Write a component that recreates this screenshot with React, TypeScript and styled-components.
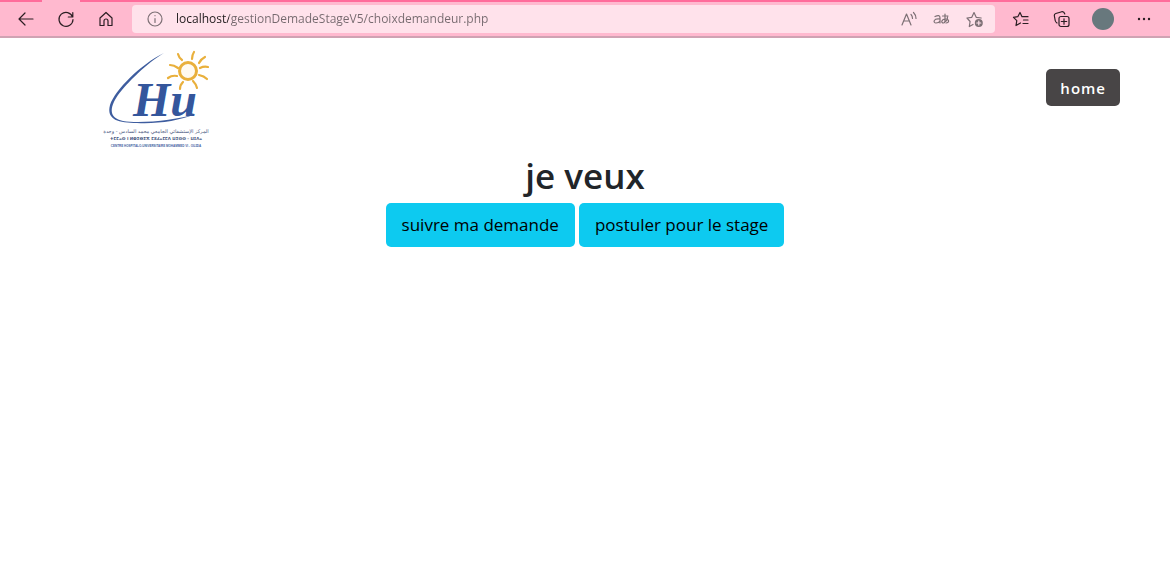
import React from "react";
import styled, { createGlobalStyle } from "styled-components";

const GlobalStyle = createGlobalStyle`
  *, *::before, *::after { box-sizing: border-box; }
  body {
    margin: 0;
    background: #fff;
    color: #212529;
    font-family: "Open Sans", "Noto Sans", sans-serif;
  }
`;

const TabStrip = styled.div`
  height: 2px;
  padding-left: 42px;
  background: #ff6c9b;
`;

const ActiveTab = styled.div`
  width: 38px;
  height: 2px;
  background: #ffb9cf;
`;

const Toolbar = styled.nav`
  display: flex;
  align-items: center;
  height: 36px;
  padding: 0 10px;
  background: #ffb9cf;
  border-bottom: 2px solid #cfa3b3;
`;

const IconGroup = styled.div<{ $gap: number }>`
  display: flex;
  align-items: center;
  gap: ${(p) => p.$gap}px;
`;

const IconButton = styled.button<{ $muted?: boolean }>`
  display: grid;
  place-items: center;
  width: 32px;
  height: 28px;
  padding: 0;
  border: 0;
  background: none;
  color: ${(p) => (p.$muted ? "#7d7075" : "#2b1e23")};
  cursor: pointer;
`;

const AddressBar = styled.form`
  display: flex;
  flex: 1;
  align-items: center;
  height: 28px;
  margin: 0 10px;
  padding: 0 4px 0 7px;
  border-radius: 4px;
  background: #ffe2eb;
`;

const AddressInput = styled.input`
  flex: 1;
  min-width: 0;
  height: 24px;
  margin-left: 5px;
  padding: 0;
  border: 0;
  outline: 0;
  font: 400 12px/24px "Open Sans", "Noto Sans", sans-serif;
  color: #75696e;
  background: linear-gradient(90deg, #1f1a1c 53px, #75696e 53px);
  -webkit-background-clip: text;
  background-clip: text;
  -webkit-text-fill-color: transparent;
`;

const Avatar = styled.span`
  width: 22px;
  height: 22px;
  border-radius: 50%;
  background: #68787d;
`;

const Header = styled.header`
  display: flex;
  align-items: flex-start;
  justify-content: space-between;
  padding: 10px 50px 0 103px;
`;

const HomeButton = styled.button`
  height: 37px;
  margin-top: 21px;
  padding: 0 14px;
  border: 0;
  border-radius: 5px;
  background: #484546;
  color: #fff;
  font: 600 15px/38px "Open Sans", "Noto Sans", sans-serif;
  letter-spacing: 1px;
  cursor: pointer;
`;

const Main = styled.main`
  display: flex;
  flex-direction: column;
  align-items: center;
  gap: 3px;
`;

const Title = styled.h1`
  margin: 0;
  font-size: 35px;
  font-weight: 600;
  line-height: 48px;
`;

const Actions = styled.div`
  display: flex;
  gap: 4px;
`;

const ActionButton = styled.button`
  height: 44px;
  padding: 0 16px;
  border: 0;
  border-radius: 5px;
  background: #0dcaf0;
  color: #000;
  font: 400 17px/44px "Open Sans", "Noto Sans", sans-serif;
  cursor: pointer;
`;

const Icon = ({ children, size = 18 }: { children: React.ReactNode; size?: number }) => (
  <svg
    width={size}
    height={size}
    viewBox="0 0 18 18"
    fill="none"
    stroke="currentColor"
    strokeWidth="1.2"
    strokeLinecap="round"
    strokeLinejoin="round"
    aria-hidden="true"
  >
    {children}
  </svg>
);

const Logo = () => (
  <svg width="110" height="104" viewBox="0 0 110 104" role="img" aria-label="CHU Mohammed VI Oujda">
    <g fill="none" stroke="#e9b03c" strokeWidth="2.200" strokeLinecap="round">
      <path d="M75 6q1 4 4 6M91 4q-2 3-2 7M102 9q-4 2-6 6M67 17q4 0 8 3M65 30q4-3 9-2M77 41q0-4 3-7M94 40q-1-4-4-7M104 31q-3-3-8-4M105 19q-4-1-8 1" />
    </g>
    <circle cx="85" cy="23" r="8.500" fill="#fffaf0" stroke="#e9b03c" strokeWidth="3" />
    <path
      d="M61 5C44 15 24 35 15 47 6 60 6 70 20 73c18 3 54-1 72-7-16 7-38 10-58 9C16 75 3 72 7 57 12 42 38 16 61 5z"
      fill="#3e5d9f"
    />
    <text x="30" y="68" fontFamily="Liberation Serif, serif" fontSize="48" fontWeight="700" fontStyle="italic" fill="#34569c">
      Hu
    </text>
    <text x="53" y="85" textAnchor="middle" fontFamily="DejaVu Sans, sans-serif" fontSize="5" fill="#46557d">
      المركز الإستشفائي الجامعي محمد السادس - وجدة
    </text>
    <text x="53" y="92" textAnchor="middle" fontFamily="DejaVu Sans, sans-serif" fontSize="4" fontWeight="700" fill="#46557d">
      ⵜⵎⵎⴰⵙ ⵏ ⵍⵀⵉⴱⵉⵅ ⵎⵓⵃⴰⵎⵎⴷ ⵡⵉⵙⵙ - ⵡⵊⴷⴰ
    </text>
    <text x="53" y="99" textAnchor="middle" fontFamily="Liberation Sans Narrow, Liberation Sans, sans-serif" fontSize="3" fontWeight="700" fill="#3f629f">
      CENTRE HOSPITALO-UNIVERSITAIRE MOHAMMED VI - OUJDA
    </text>
  </svg>
);

export default function App() {
  return (
    <>
      <GlobalStyle />
      <TabStrip>
        <ActiveTab />
      </TabStrip>
      <Toolbar aria-label="Browser toolbar">
        <IconGroup $gap={8}>
          <IconButton aria-label="Back">
            <Icon><path d="M16 9H2M8 3L2 9l6 6" /></Icon>
          </IconButton>
          <IconButton aria-label="Refresh">
            <Icon><path d="M15.6 7A7 7 0 1 0 16 9.500M15.800 2.500V7h-4.500" /></Icon>
          </IconButton>
          <IconButton aria-label="Home">
            <Icon><path d="M3 8l6-5.500L15 8v7.500h-4V11a2 2 0 0 0-4 0v4.500H3z" /></Icon>
          </IconButton>
        </IconGroup>
        <AddressBar onSubmit={(e) => e.preventDefault()}>
          <IconButton type="button" $muted aria-label="Site information">
            <Icon>
              <circle cx="9" cy="9" r="7" />
              <path d="M9 8.500v4M9 5.500v.2" />
            </Icon>
          </IconButton>
          <AddressInput aria-label="Address" defaultValue="localhost/gestionDemadeStageV5/choixdemandeur.php" spellCheck={false} />
          <IconGroup $gap={1}>
            <IconButton type="button" $muted aria-label="Read aloud">
              <Icon>
                <path d="M2 15L6.500 4 11 15M3.500 11h6M11 4.500q1.500 1.500 1.500 4M13.500 2.500q2.500 2.500 2.500 6" />
              </Icon>
            </IconButton>
            <IconButton type="button" $muted aria-label="Translate">
              <Icon>
                <path d="M2 6.500q5-2.500 5 1.500v5M7 9C0 8 0 13 3 13q3 0 4-2M9.500 6h5.500M12 4v7q0 2-1.500 2c-3 0-2-4 2-4 4-.2 4 4 .5 4M14.500 7q0 4-3 5" />
              </Icon>
            </IconButton>
            <IconButton type="button" $muted aria-label="Add to favorites">
              <Icon>
                <path d="M7 14.500l-3.700 2 .8-5L1 8l4.800-.7L8 2.500l2.200 4.800 5 .7" />
                <circle cx="12.800" cy="13" r="4" fill="currentColor" stroke="none" />
                <path d="M10.800 13h4M12.800 11v4" stroke="#ffe2eb" />
              </Icon>
            </IconButton>
          </IconGroup>
        </AddressBar>
        <IconGroup $gap={9}>
          <IconButton aria-label="Favorites">
            <Icon>
              <path d="M8.500 13L4 15.500l.8-4.800L1.500 7.300l4.300-.6L8 2.500l2 4.200h6M11.500 10H16M11 13.500h5" />
            </Icon>
          </IconButton>
          <IconButton aria-label="Collections">
            <Icon>
              <rect x="6" y="6.500" width="10" height="10" rx="2" />
              <path d="M11 8.800v5.400M8.300 11.500h5.400M4 13Q2.500 12 2.200 10.500L1.300 5.500Q1.200 4 2.800 3.500l6-1.800Q11 1.300 11.800 4" />
            </Icon>
          </IconButton>
          <IconButton aria-label="Profile">
            <Avatar />
          </IconButton>
          <IconButton aria-label="Settings and more">
            <Icon>
              <g fill="currentColor" stroke="none">
                <circle cx="4" cy="9" r="1.200" />
                <circle cx="9" cy="9" r="1.200" />
                <circle cx="14" cy="9" r="1.200" />
              </g>
            </Icon>
          </IconButton>
        </IconGroup>
      </Toolbar>
      <Header>
        <Logo />
        <HomeButton>home</HomeButton>
      </Header>
      <Main>
        <Title>je veux</Title>
        <Actions>
          <ActionButton>suivre ma demande</ActionButton>
          <ActionButton>postuler pour le stage</ActionButton>
        </Actions>
      </Main>
    </>
  );
}
